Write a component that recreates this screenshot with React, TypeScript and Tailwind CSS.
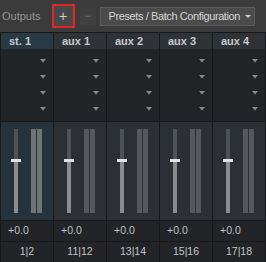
import React from "react";

const cols = [
  { name: "st. 1", ch: "1|2", sel: true },
  { name: "aux 1", ch: "11|12", sel: false },
  { name: "aux 2", ch: "13|14", sel: false },
  { name: "aux 3", ch: "15|16", sel: false },
  { name: "aux 4", ch: "17|18", sel: false },
];

function Caret() {
  return (
    <svg width="6" height="4" viewBox="0 0 6 4" className="block">
      <polygon points="0,0 6,0 3,3.5" fill="#8a8c8e" />
    </svg>
  );
}

function Column({ name, ch, sel }: { name: string; ch: string; sel: boolean }) {
  return (
    <div className="flex flex-col w-[52px]">
      <div
        className={`h-[16px] flex items-center pl-[8px] text-[11px] font-bold text-[#c8cacb] ${
          sel ? "bg-[#2a3a45]" : "bg-[#2f3337]"
        }`}
      >
        {name}
      </div>
      <div className="h-[72px] bg-[#222528] pt-[4px]">
        {[0, 1, 2, 3].map((i) => (
          <div key={i} className="h-[16px] flex items-center justify-end pr-[7px]">
            <Caret />
          </div>
        ))}
      </div>
      <div
        className={`h-[98px] mt-[1px] flex pt-[7px] pl-[10px] ${
          sel ? "bg-[#27333c]" : "bg-[#2c2f33]"
        }`}
      >
        <div className="relative w-[10px] h-[84px] flex justify-center">
          <div className="w-[4px] h-full flex flex-col">
            <div className="h-[30px] bg-[#4e5357]" />
            <div className="flex-1 bg-[#8a8d90]" />
          </div>
          <div className="absolute left-0 top-[30px] w-[10px] h-[3px] bg-[#e2e2e2]" />
        </div>
        <div className="ml-[10px] flex gap-[1px] h-[84px]">
          <div className={`w-[5px] h-full ${sel ? "bg-[#6f7477]" : "bg-[#55595c]"}`} />
          <div className={`w-[5px] h-full ${sel ? "bg-[#6f7477]" : "bg-[#55595c]"}`} />
        </div>
      </div>
      <div className="h-[20px] mt-[1px] bg-[#222427] flex items-center pl-[7px] text-[10.5px] text-[#bfc1c2]">
        +0.0
      </div>
      <div className="h-[20px] mt-[1px] bg-[#222427] flex items-center justify-center text-[10.5px] text-[#c4c6c7]">
        {ch}
      </div>
    </div>
  );
}

export default function App() {
  return (
    <div
      className="w-[266px] h-[262px] overflow-hidden bg-[#17181a] flex flex-col"
      style={{ fontFamily: '"Liberation Sans", Arial, sans-serif' }}
    >
      <div className="h-[32px] bg-[#3b3b3b] flex items-center relative">
        <span className="ml-[2px] text-[11px] text-[#959595]">Outputs</span>
        <div className="ml-[11px] w-[23px] h-[24px] border-2 border-[#e3262a] flex items-center justify-center">
          <div className="w-[19px] h-[20px] bg-[#474747] flex items-center justify-center text-[14px] leading-none text-[#d0d0d0]">
            +
          </div>
        </div>
        <div className="ml-[5px] w-[16px] h-[17px] bg-[#404040] flex items-center justify-center text-[12px] leading-none text-[#6a6a6a]">
          −
        </div>
        <div className="ml-[4px] w-[155px] h-[19px] bg-[#4b4b4b] border border-[#5c5c5c] flex items-center pl-[8px] text-[11px] tracking-[-0.4px] text-[#d6d6d6]">
          <span>Presets / Batch Configuration</span>
          <svg width="6" height="3" viewBox="0 0 6 3" className="ml-[5px]">
            <polygon points="0,0 6,0 3,3" fill="#d0d0d0" />
          </svg>
        </div>
      </div>
      <div className="h-[1px]" />
      <div className="flex gap-[1px] pl-[1px]">
        {cols.map((c) => (
          <Column key={c.name} {...c} />
        ))}
      </div>
    </div>
  );
}
